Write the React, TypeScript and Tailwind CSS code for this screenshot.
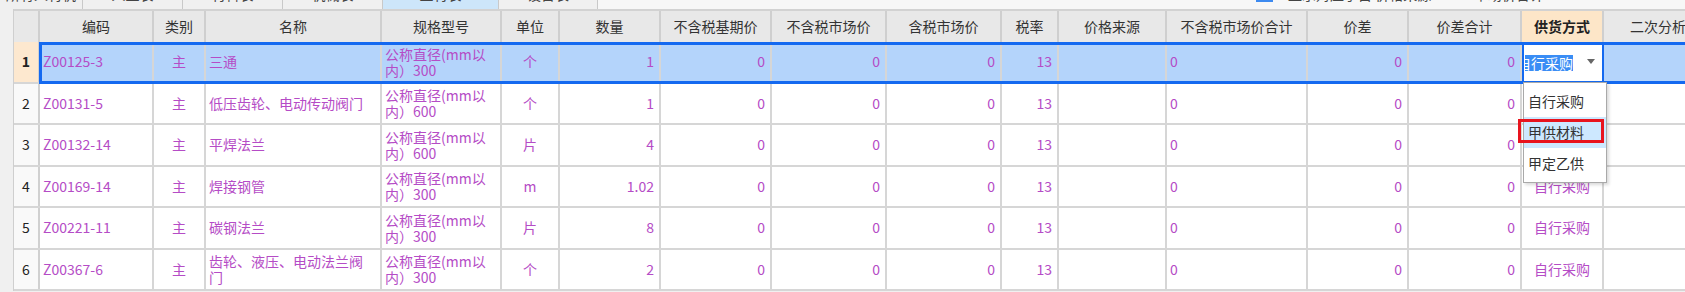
import React from "react";

type Align = "left" | "center" | "right";

type Col = { key: string; title: string; w: number; align: Align };

const COLS: Col[] = [
  { key: "code", title: "编码", w: 114, align: "left" },
  { key: "type", title: "类别", w: 52, align: "center" },
  { key: "name", title: "名称", w: 176, align: "left" },
  { key: "spec", title: "规格型号", w: 120, align: "left" },
  { key: "unit", title: "单位", w: 58, align: "center" },
  { key: "qty", title: "数量", w: 101, align: "right" },
  { key: "base", title: "不含税基期价", w: 111, align: "right" },
  { key: "market", title: "不含税市场价", w: 115, align: "right" },
  { key: "taxMarket", title: "含税市场价", w: 115, align: "right" },
  { key: "rate", title: "税率", w: 57, align: "right" },
  { key: "source", title: "价格来源", w: 108, align: "left" },
  { key: "total", title: "不含税市场价合计", w: 141, align: "left" },
  { key: "diff", title: "价差", w: 101, align: "right" },
  { key: "diffTotal", title: "价差合计", w: 113, align: "right" },
  { key: "supply", title: "供货方式", w: 82, align: "center" },
  { key: "analysis", title: "二次分析", w: 110, align: "left" },
];

type Row = Record<string, string | string[]>;

const ROWS: Row[] = [
  { code: "Z00125-3", name: "三通", spec: ["公称直径(mm以", "内）300"], unit: "个", qty: "1" },
  { code: "Z00131-5", name: "低压齿轮、电动传动阀门", spec: ["公称直径(mm以", "内）600"], unit: "个", qty: "1" },
  { code: "Z00132-14", name: "平焊法兰", spec: ["公称直径(mm以", "内）600"], unit: "片", qty: "4" },
  { code: "Z00169-14", name: "焊接钢管", spec: ["公称直径(mm以", "内）300"], unit: "m", qty: "1.02" },
  { code: "Z00221-11", name: "碳钢法兰", spec: ["公称直径(mm以", "内）300"], unit: "片", qty: "8" },
  { code: "Z00367-6", name: ["齿轮、液压、电动法兰阀", "门"], spec: ["公称直径(mm以", "内）300"], unit: "个", qty: "2" },
];

const TABS = [
  { label: "所有人材机", w: 83 },
  { label: "人工表", w: 100 },
  { label: "材料表", w: 100 },
  { label: "机械表", w: 100 },
  { label: "主材表", w: 116, active: true },
  { label: "设备表", w: 99 },
];

function cellValue(row: Row, key: string): string | string[] {
  if (key === "type") return "主";
  if (["base", "market", "taxMarket", "total", "diff", "diffTotal"].includes(key)) return "0";
  if (key === "rate") return "13";
  if (key === "supply") return "自行采购";
  if (key === "source" || key === "analysis") return "";
  return row[key] ?? "";
}

const alignClass: Record<Align, string> = {
  left: "justify-start text-left pl-[3px]",
  center: "justify-center text-center",
  right: "justify-end text-right pr-[5px]",
};

function TopStrip() {
  return (
    <div className="flex h-[9px] overflow-hidden bg-[#f7f7f7]">
      {TABS.map((t) => (
        <div
          key={t.label}
          style={{ width: t.w }}
          className={`relative shrink-0 overflow-hidden border-r border-[#c9c9c9] ${
            t.active ? "bg-[#cde6fa]" : "bg-[#f0f0f0]"
          }`}
        >
          <span className="absolute left-0 right-0 top-[-14px] text-center text-[14px] leading-[16px] text-[#444]">
            {t.label}
          </span>
        </div>
      ))}
      <div className="relative flex-1">
        <span className="absolute left-[658px] top-[-10px] h-[12px] w-[17px] bg-[#3d8af0]" />
        <span className="absolute left-[690px] top-[-14px] text-[14px] leading-[16px] text-[#444]">
          显示对应子目 价格来源
        </span>
        <span className="absolute left-[876px] top-[-14px] text-[14px] leading-[16px] text-[#444]">
          市场价合计
        </span>
      </div>
    </div>
  );
}

function Header() {
  return (
    <div className="flex h-[33px] border-t-2 border-[#d2d2d2] bg-[#e8e8e8]">
      <div className="w-[26px] shrink-0 border-r-2 border-[#cfcfcf]" />
      {COLS.map((c) => (
        <div
          key={c.key}
          style={{ width: c.w }}
          className={`flex shrink-0 items-center justify-center border-r-2 border-[#cfcfcf] text-[14px] ${
            c.key === "supply" ? "bg-[#fde6c8] font-bold text-[#222]" : "text-[#333]"
          }`}
        >
          {c.title}
        </div>
      ))}
    </div>
  );
}

function Text({ v }: { v: string | string[] }) {
  if (Array.isArray(v)) {
    return (
      <div className="leading-[16px]">
        {v.map((line) => (
          <div key={line} className="whitespace-nowrap">
            {line}
          </div>
        ))}
      </div>
    );
  }
  return <span className="whitespace-nowrap">{v}</span>;
}

function EditingCell({ w }: { w: number }) {
  return (
    <div
      style={{ width: w }}
      className="flex h-full shrink-0 items-center border-x-2 border-[#1469f0] bg-white pl-[1px]"
    >
      <div className="w-[52px] overflow-hidden">
        <span className="-ml-[8px] inline-block whitespace-nowrap bg-[#3a8df5] text-[14px] leading-[16px] text-white">
          自行采购
        </span>
      </div>
      <span className="ml-[10px] h-0 w-0 border-x-[4px] border-t-[5px] border-x-transparent border-t-[#666]" />
    </div>
  );
}

function DataRow({ row, idx }: { row: Row; idx: number }) {
  const selected = idx === 0;
  return (
    <div
      className={`flex h-[41.5px] border-b-2 border-[#d6d6d6] ${
        selected ? "bg-[#b4d4fb]" : "bg-white"
      }`}
    >
      <div
        className={`flex w-[26px] shrink-0 items-center justify-center border-r-2 border-[#d0d0d0] text-[14px] text-[#222] ${
          selected ? "bg-[#fde8cf] font-bold" : "bg-[#f9f9f9]"
        }`}
      >
        {idx + 1}
      </div>
      {COLS.map((c) =>
        selected && c.key === "supply" ? (
          <EditingCell key={c.key} w={c.w} />
        ) : (
          <div
            key={c.key}
            style={{ width: c.w }}
            className={`flex shrink-0 items-center overflow-hidden border-r-2 border-[#d6d6d6] text-[14px] text-[#b54cc6] ${
              alignClass[c.align]
            }`}
          >
            <Text v={cellValue(row, c.key)} />
          </div>
        )
      )}
    </div>
  );
}

function Dropdown() {
  const items = ["自行采购", "甲供材料", "甲定乙供"];
  return (
    <div className="absolute left-[1523px] top-[82px] w-[84px] border border-[#a9a9a9] bg-white py-[3px] shadow-[2px_2px_3px_rgba(0,0,0,0.15)]">
      {items.map((it, i) => (
        <div
          key={it}
          className={`flex h-[31px] items-center pl-[4px] text-[14px] text-[#333] ${
            i === 1 ? "bg-[#cde8ff]" : ""
          }`}
        >
          {it}
        </div>
      ))}
    </div>
  );
}

export default function App() {
  return (
    <div className="relative h-[292px] w-[1685px] overflow-hidden bg-[#f0f0f0] font-['Noto_Sans_CJK_SC','Noto_Sans',sans-serif]">
      <TopStrip />
      <div className="flex">
        <div className="w-[14px] shrink-0 border-r border-[#cfcfcf] bg-[#f0f0f0]" />
        <div className="flex-1 overflow-hidden">
          <Header />
          {ROWS.map((r, i) => (
            <DataRow key={i} row={r} idx={i} />
          ))}
        </div>
      </div>

      {/* selected row outline */}
      <div className="pointer-events-none absolute left-[39px] top-[42px] h-[42px] w-[1700px] border-[3px] border-[#1469f0]" />

      <Dropdown />

      {/* red annotation box */}
      <div className="pointer-events-none absolute left-[1518px] top-[119px] h-[24px] w-[86px] border-[3px] border-[#e8141e]" />
    </div>
  );
}
